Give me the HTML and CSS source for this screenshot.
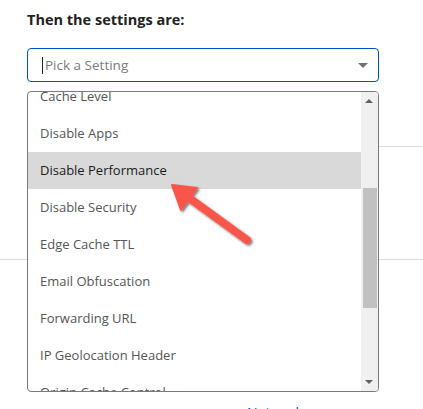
FILE: index.html
```html
<!DOCTYPE html>
<html>
<head>
<meta charset="utf-8">
<link rel="stylesheet" href="styles.css">
</head>
<body>
<div class="page">
  <h2 class="title">Then the settings are:</h2>
  <div class="select">
    <span class="caret"></span>
    <span class="placeholder">Pick a Setting</span>
    <span class="dd-arrow"></span>
  </div>
  <div class="below">
    <div class="rule rule-a"></div>
    <div class="rule rule-b"></div>
    <div class="link-row"><a class="link">Network</a></div>
  </div>

  <div class="listbox">
    <ul class="options">
      <li>Cache Level</li>
      <li>Disable Apps</li>
      <li class="active">Disable Performance</li>
      <li>Disable Security</li>
      <li>Edge Cache TTL</li>
      <li>Email Obfuscation</li>
      <li>Forwarding URL</li>
      <li>IP Geolocation Header</li>
      <li>Origin Cache Control</li>
    </ul>
    <div class="scrollbar">
      <span class="sb-up"></span>
      <span class="sb-thumb"></span>
      <span class="sb-down"></span>
    </div>
  </div>

  <svg class="pointer" width="100" height="80" viewBox="0 0 100 80">
    <defs>
      <filter id="sh" x="-20%" y="-20%" width="150%" height="150%">
        <feDropShadow dx="1.5" dy="1.5" stdDeviation="1.2" flood-color="#000" flood-opacity="0.55"/>
      </filter>
    </defs>
    <g filter="url(#sh)" fill="#f9574b" stroke="#f9574b">
      <line x1="20" y1="17" x2="82" y2="62" stroke-width="8" stroke-linecap="round"/>
      <polygon points="7,7 32,10 16,32" stroke-width="2" stroke-linejoin="round"/>
    </g>
  </svg>
</div>
</body>
</html>
```
FILE: styles.css
```css
html, body {
  margin: 0;
  padding: 0;
  background: #fff;
}
body {
  width: 423px;
  height: 409px;
  overflow: hidden;
  font-family: "Open Sans", "Noto Sans", sans-serif;
}
.page {
  position: relative;
  padding: 0 0 0 27px;
}
.title {
  margin: 0;
  padding-top: 10px;
  font-size: 14.5px;
  line-height: 20px;
  font-weight: 700;
  color: #222;
}
.select {
  margin-top: 18px;
  height: 32px;
  border: 1px solid #0051c3;
  border-radius: 4px;
  display: flex;
  align-items: center;
  padding-left: 14px;
  box-sizing: content-box;
  position: relative;
  width: 336px;
}
.caret {
  width: 1px;
  height: 17px;
  background: #222;
  margin-right: 2px;
}
.placeholder {
  font-size: 13.5px;
  color: #7c7c7c;
  flex: 1;
}
.dd-arrow {
  width: 0;
  height: 0;
  border-left: 5px solid transparent;
  border-right: 5px solid transparent;
  border-top: 5px solid #727272;
  margin-right: 10px;
}
.below {
  margin-left: -27px;
}
.rule {
  height: 1px;
  background: #dcdcdc;
}
.rule-a {
  margin-top: 64px;
  margin-left: 60px;
}
.rule-b {
  margin-top: 112px;
}
.link-row {
  padding-top: 141px;
  padding-left: 247px;
}
.link {
  font-size: 14px;
  line-height: 20px;
  color: #0051c3;
}
.listbox {
  position: absolute;
  left: 27px;
  top: 91px;
  width: 350px;
  height: 299px;
  border: 1px solid #7a7a7a;
  border-radius: 4px;
  display: flex;
  overflow: hidden;
  background: #fff;
}
.options {
  list-style: none;
  margin: -14px 0 0 0;
  padding: 0;
  flex: 1;
}
.options li {
  height: 37px;
  line-height: 37px;
  padding-left: 12px;
  font-size: 13px;
  color: #555;
}
.options li.active {
  background: #d9d9d9;
  color: #1a1a1a;
}
.scrollbar {
  width: 17px;
  background: #f0f0f0;
  position: relative;
}
.sb-up, .sb-down {
  position: absolute;
  left: 4px;
  width: 0;
  height: 0;
  border-left: 4px solid transparent;
  border-right: 4px solid transparent;
}
.sb-up {
  top: 7px;
  border-bottom: 4px solid #606060;
}
.sb-down {
  bottom: 7px;
  border-top: 4px solid #606060;
}
.sb-thumb {
  position: absolute;
  left: 2px;
  right: 1px;
  top: 96px;
  height: 120px;
  background: #c1c1c1;
}
.pointer {
  position: absolute;
  left: 165px;
  top: 178px;
}
```
